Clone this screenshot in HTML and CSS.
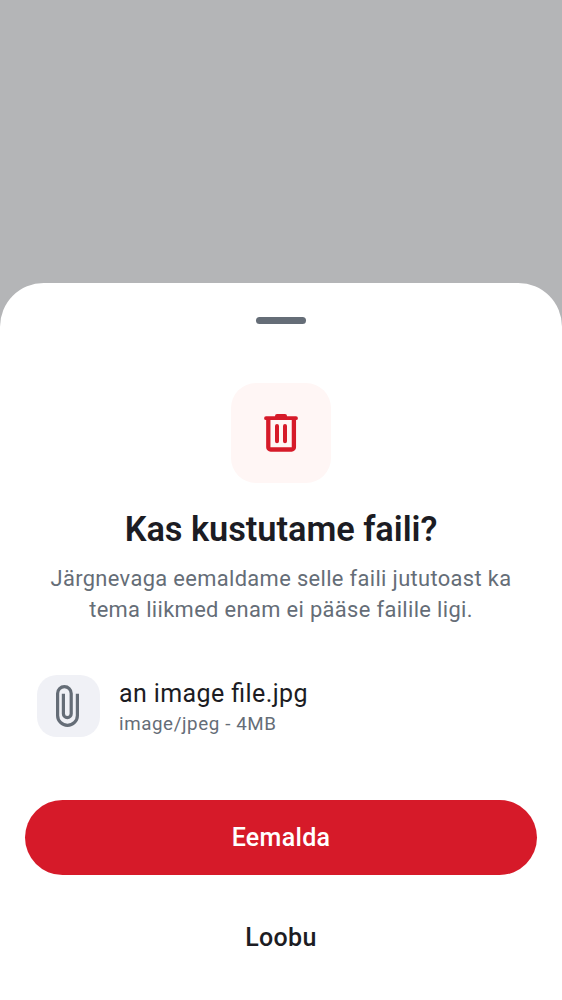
FILE: index.html
```html
<!DOCTYPE html>
<html lang="et">
<head>
<meta charset="utf-8">
<title>Kas kustutame faili?</title>
<link rel="stylesheet" href="styles.css">
</head>
<body>
<main class="sheet">
  <div class="handle"></div>
  <div class="hero">
    <svg width="100" height="100" viewBox="0 0 100 100" fill="none" aria-hidden="true">
      <path class="trash-fill" d="M44 33.3V33a2 2 0 0 1 2-2h8a2 2 0 0 1 2 2v.3h9a1.9 1.9 0 0 1 0 3.8H35a1.9 1.9 0 0 1 0-3.8z"/>
      <path class="trash-line" d="M37.3 36V64.2a2.3 2.3 0 0 0 2.3 2.3H60.6a2.3 2.3 0 0 0 2.3-2.3V36"/>
      <path class="trash-bars" d="M46 43V58.2M54 43V58.2"/>
    </svg>
  </div>
  <h1 class="title">Kas kustutame faili?</h1>
  <p class="message">Järgnevaga eemaldame selle faili jututoast ka<br>tema liikmed enam ei pääse failile ligi.</p>
  <div class="file">
    <div class="file-icon">
      <svg width="63" height="63" viewBox="0 0 63 63" fill="none" aria-hidden="true">
        <path class="clip" d="M40.4 18.8V40.4a9.9 9.9 0 0 1-19.8 0V18.4a6.8 6.8 0 0 1 13.6 0V38.7a3.9 3.9 0 0 1-7.8 0V18.8"/>
      </svg>
    </div>
    <div class="file-text">
      <div class="file-name">an image file.jpg</div>
      <div class="file-meta">image/jpeg - 4MB</div>
    </div>
  </div>
  <button class="button button-danger">Eemalda</button>
  <button class="button button-plain">Loobu</button>
</main>
</body>
</html>
```
FILE: styles.css
```css
* { box-sizing: border-box; }
body {
  margin: 0;
  height: 1000px;
  overflow: hidden;
  padding-top: 283px;
  background: #b4b5b7;
  font-family: Roboto, "Noto Sans", sans-serif;
  color: #1c1c23;
}
.sheet {
  height: 717px;
  padding: 34px 25px 0;
  display: flex;
  flex-direction: column;
  align-items: center;
  background: #fff;
  border-radius: 43.75px 43.75px 0 0;
}
.handle {
  width: 50px;
  height: 6.5px;
  border-radius: 4px;
  background: #656d77;
}
.hero {
  width: 100px;
  height: 100px;
  margin-top: 59.5px;
  border-radius: 25px;
  background: #fff6f5;
}
.hero svg, .file-icon svg { display: block; }
.trash-fill { fill: #d61a29; }
.trash-line { stroke: #d61a29; stroke-width: 4.3; }
.trash-bars { stroke: #d61a29; stroke-width: 4; stroke-linecap: round; }
.title {
  margin: 25px 0 0;
  font-size: 34.375px;
  line-height: 42px;
  font-weight: 600;
  letter-spacing: -0.04px;
  white-space: nowrap;
}
.message {
  margin: 13px 0 0;
  font-size: 21.875px;
  line-height: 31px;
  letter-spacing: 0.36px;
  text-align: center;
  white-space: nowrap;
  color: #656d77;
}
.file {
  align-self: stretch;
  display: flex;
  align-items: center;
  gap: 19px;
  margin: 49.5px 0 0;
  padding-left: 12.4px;
}
.file-icon {
  width: 62.6px;
  height: 62.6px;
  border-radius: 20px;
  background: #f0f1f6;
}
.file-text { padding-top: 2px; }
.clip { stroke: #656d77; stroke-width: 3.2; }
.file-name {
  font-size: 25px;
  line-height: 34px;
  letter-spacing: 0.4px;
  font-feature-settings: "liga" 1;
}
.file-meta {
  font-size: 18.75px;
  line-height: 27px;
  letter-spacing: 0.6px;
  color: #656d77;
}
.button {
  align-self: stretch;
  height: 75px;
  padding: 1px 0 0;
  border: 0;
  border-radius: 37.5px;
  font: 500 25px/36px Roboto, sans-serif;
  letter-spacing: 0.32px;
}
.button-danger {
  margin-top: 62.5px;
  background: #d61a29;
  color: #fff;
}
.button-plain {
  margin-top: 25px;
  background: #fff;
  color: #1c1c23;
}
```
